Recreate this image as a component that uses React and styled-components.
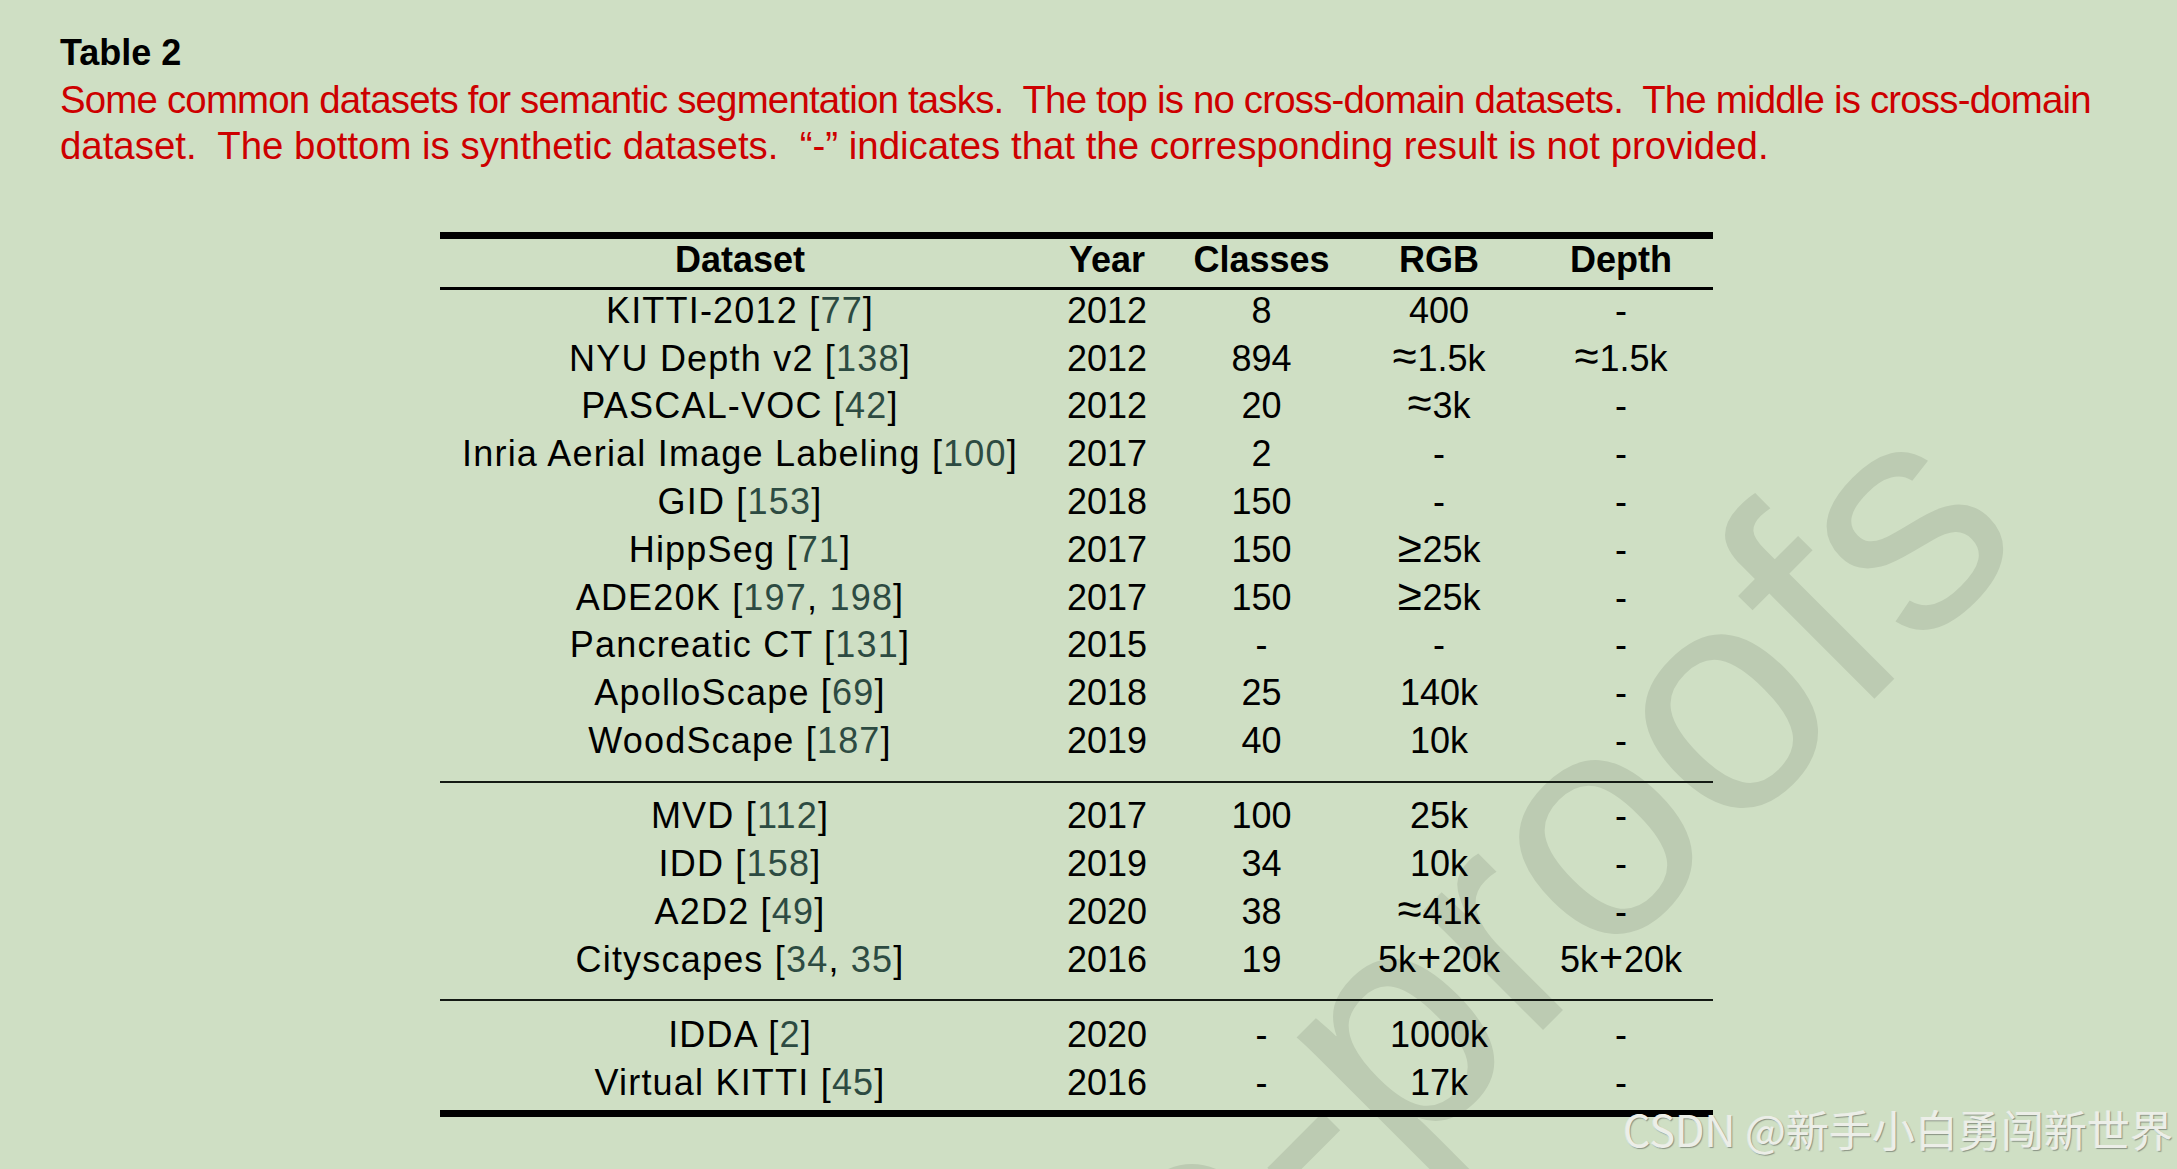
import React from 'react';
import styled, { createGlobalStyle } from 'styled-components';

const Global = createGlobalStyle`
  html, body {
    margin: 0;
    padding: 0;
    background: #cfdfc4;
  }
  body {
    font-family: "Liberation Sans", Arial, sans-serif;
  }
`;

const Page = styled.div`
  position: relative;
  width: 2177px;
  height: 1169px;
  overflow: hidden;
  box-sizing: border-box;
  padding: 30.5px 0 0 60px;
  background: #cfdfc4;
  color: #000;
  font-family: "Liberation Sans", Arial, sans-serif;
`;

const Watermark = styled.div`
  position: absolute;
  left: 168.6px;
  top: 2133px;
  z-index: 0;
  font-family: "Liberation Sans", Arial, sans-serif;
  font-size: 320px;
  line-height: 1;
  white-space: nowrap;
  color: #bccbb2;
  transform-origin: 0 270.9px;
  transform: rotate(-45deg);
  user-select: none;
`;

const SiteMark = styled.div`
  position: absolute;
  top: 1107px;
  right: 4px;
  z-index: 2;
  font-family: "Noto Sans CJK SC", "Liberation Sans", sans-serif;
  font-size: 43px;
  line-height: 1;
  white-space: nowrap;
  color: #eceee8;
  text-shadow: 1px 1px 1px rgba(80, 85, 80, 0.55), -0.5px -0.5px 0 rgba(255, 255, 255, 0.4);
`;

const Content = styled.div`
  position: relative;
  z-index: 1;
`;

const Title = styled.div`
  font-weight: 700;
  font-size: 36px;
  line-height: 44px;
`;

const Caption = styled.div`
  margin-top: 2.4px;
  color: #cd0000;
  font-size: 38.4px;
  line-height: 46.6px;
`;

const CaptionLine = styled.div`
  white-space: pre;
  letter-spacing: ${(p) => (p.$tight ? '-0.8px' : 'normal')};
`;

const Table = styled.div`
  width: 1273px;
  margin: 61.9px 0 0 380px;
`;

const Rule = styled.div`
  height: ${(p) => p.$h}px;
  background: ${(p) => p.$color || '#000'};
`;

const Section = styled.div`
  padding: ${(p) => p.$top || 0}px 0 ${(p) => p.$bottom || 0}px;
`;

const Row = styled.div`
  display: grid;
  grid-template-columns: 600px 134px 175px 180px 184px;
  height: 47.8px;
  font-size: 36px;
  line-height: 42px;
  font-weight: ${(p) => (p.$head ? 700 : 400)};
`;

const Cell = styled.div`
  text-align: center;
  white-space: pre;
  letter-spacing: ${(p) => (p.$name ? '1.2px' : 'normal')};
`;

const Cite = styled.span`
  color: #2d4b42;
`;

const Sym = styled.span`
  font-size: 1.22em;
  line-height: 0;
  margin-right: 1px;
`;

const Plus = styled.span`
  font-size: 1.15em;
  line-height: 0;
  margin: 0 1px;
`;

function Value({ v }) {
  if (v.startsWith('\u2248') || v.startsWith('\u2265')) {
    return (
      <>
        <Sym>{v[0]}</Sym>
        {v.slice(1)}
      </>
    );
  }
  if (v.includes('+')) {
    const [a, b] = v.split('+');
    return (
      <>
        {a}
        <Plus>+</Plus>
        {b}
      </>
    );
  }
  return v;
}

const topRows = [
  ['KITTI-2012', ['77'], '2012', '8', '400', '-'],
  ['NYU Depth v2', ['138'], '2012', '894', '≈1.5k', '≈1.5k'],
  ['PASCAL-VOC', ['42'], '2012', '20', '≈3k', '-'],
  ['Inria Aerial Image Labeling', ['100'], '2017', '2', '-', '-'],
  ['GID', ['153'], '2018', '150', '-', '-'],
  ['HippSeg', ['71'], '2017', '150', '≥25k', '-'],
  ['ADE20K', ['197', '198'], '2017', '150', '≥25k', '-'],
  ['Pancreatic CT', ['131'], '2015', '-', '-', '-'],
  ['ApolloScape', ['69'], '2018', '25', '140k', '-'],
  ['WoodScape', ['187'], '2019', '40', '10k', '-'],
];

const midRows = [
  ['MVD', ['112'], '2017', '100', '25k', '-'],
  ['IDD', ['158'], '2019', '34', '10k', '-'],
  ['A2D2', ['49'], '2020', '38', '≈41k', '-'],
  ['Cityscapes', ['34', '35'], '2016', '19', '5k+20k', '5k+20k'],
];

const bottomRows = [
  ['IDDA', ['2'], '2020', '-', '1000k', '-'],
  ['Virtual KITTI', ['45'], '2016', '-', '17k', '-'],
];

function DataRow({ row }) {
  const [name, refs, year, classes, rgb, depth] = row;
  return (
    <Row>
      <Cell $name>
        {name} [
        {refs.map((r, i) => (
          <React.Fragment key={r}>
            {i > 0 && ', '}
            <Cite>{r}</Cite>
          </React.Fragment>
        ))}
        ]
      </Cell>
      <Cell>{year}</Cell>
      <Cell>{classes}</Cell>
      <Cell>
        <Value v={rgb} />
      </Cell>
      <Cell>
        <Value v={depth} />
      </Cell>
    </Row>
  );
}

export default function App() {
  return (
    <>
      <Global />
      <Page>
        <Watermark>Journal Pre-proofs</Watermark>
        <Content>
          <Title>Table 2</Title>
          <Caption>
            <CaptionLine $tight>
              {'Some common datasets for semantic segmentation tasks.  The top is no cross-domain datasets.  The middle is cross-domain'}
            </CaptionLine>
            <CaptionLine>
              {'dataset.  The bottom is synthetic datasets.  \u201C-\u201D indicates that the corresponding result is not provided.'}
            </CaptionLine>
          </Caption>
          <Table>
            <Rule $h={7} />
            <Row $head>
              <Cell>Dataset</Cell>
              <Cell>Year</Cell>
              <Cell>Classes</Cell>
              <Cell>RGB</Cell>
              <Cell>Depth</Cell>
            </Row>
            <Rule $h={3} />
            <Section $bottom={13}>
              {topRows.map((r) => (
                <DataRow key={r[0]} row={r} />
              ))}
            </Section>
            <Rule $h={2} $color="#141a14" />
            <Section $top={12.5} $bottom={13}>
              {midRows.map((r) => (
                <DataRow key={r[0]} row={r} />
              ))}
            </Section>
            <Rule $h={2} $color="#141a14" />
            <Section $top={12.5}>
              {bottomRows.map((r) => (
                <DataRow key={r[0]} row={r} />
              ))}
            </Section>
            <Rule $h={7} />
          </Table>
        </Content>
        <SiteMark>CSDN @新手小白勇闯新世界</SiteMark>
      </Page>
    </>
  );
}
